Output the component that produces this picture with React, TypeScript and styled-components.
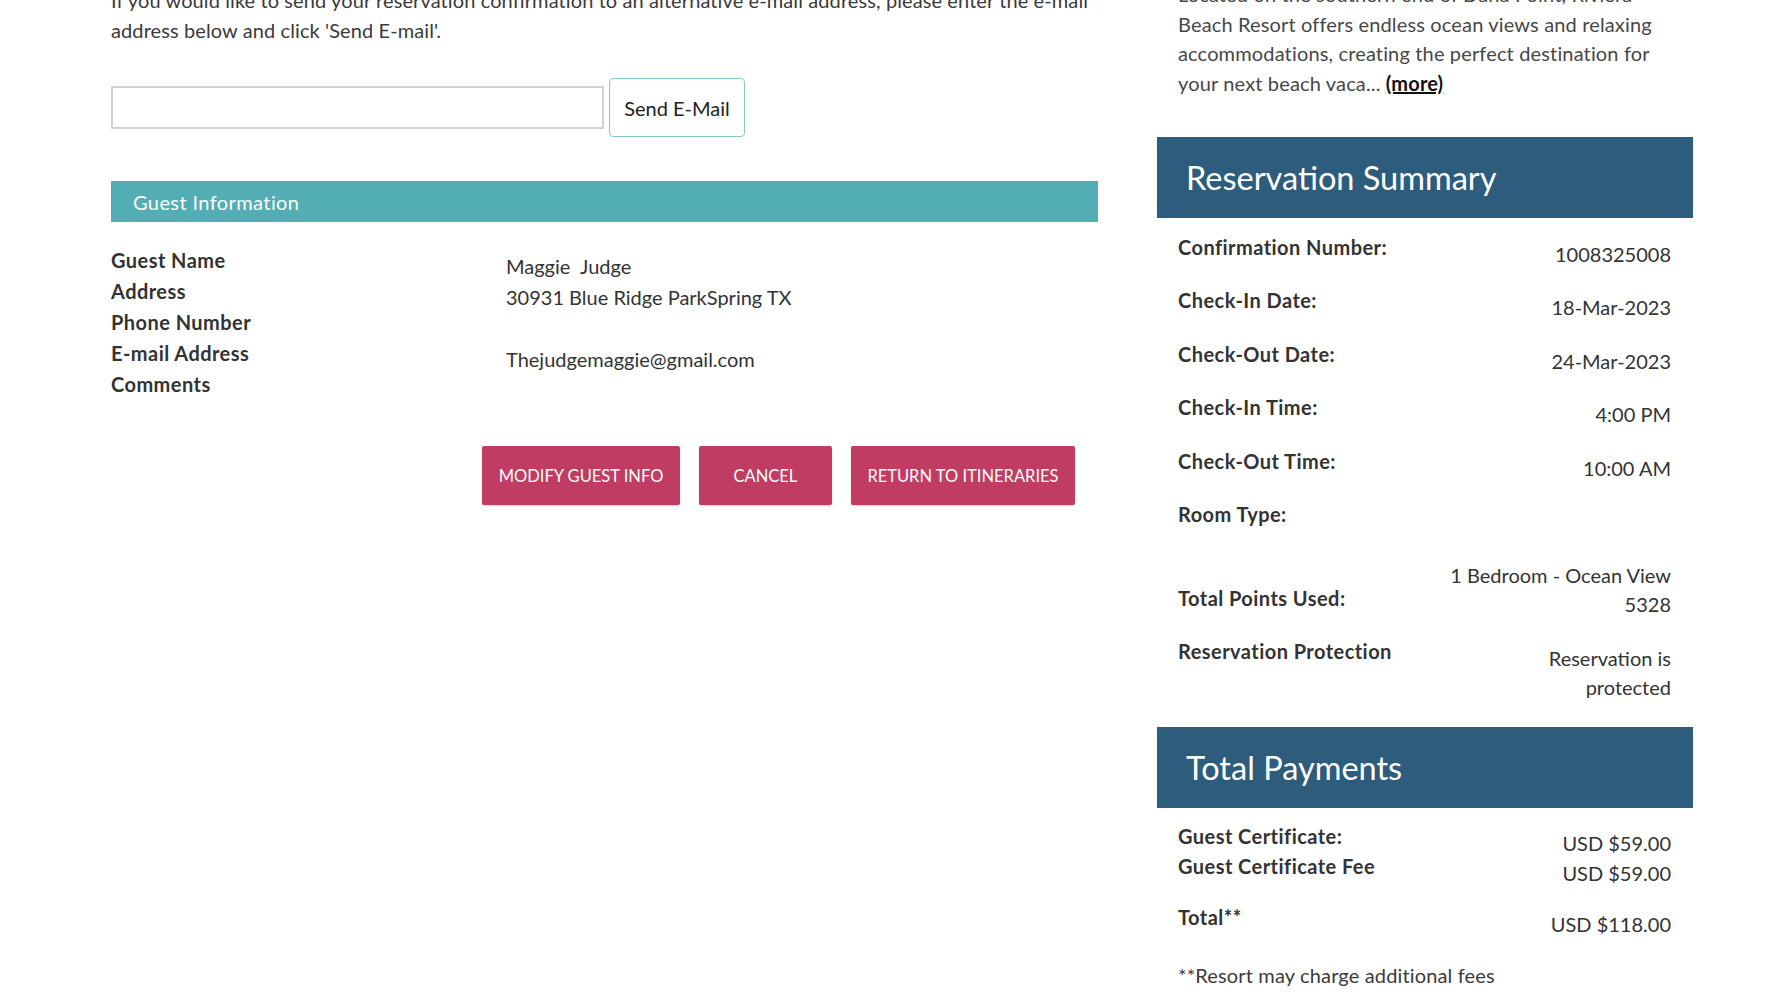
import styled, { createGlobalStyle } from "styled-components";

const GlobalStyle = createGlobalStyle`
  html, body {
    margin: 0;
    padding: 0;
    background: #ffffff;
    overflow: hidden;
  }
  body {
    font-family: Lato, "Open Sans", "Liberation Sans", sans-serif;
    color: #333333;
  }
`;

const Page = styled.div`
  display: grid;
  grid-template-columns: 987px 536px;
  column-gap: 59px;
  padding-left: 111px;
  margin-top: -20px;
  height: 1020px;
  overflow: hidden;
`;

const LeftColumn = styled.div`
  display: flex;
  flex-direction: column;
  padding-top: 4.5px;
`;

const Intro = styled.p`
  margin: 0;
  font-size: 20px;
  line-height: 30px;
  letter-spacing: 0.1px;
  color: #3a3a3a;
  white-space: nowrap;
`;

const EmailRow = styled.div`
  display: flex;
  align-items: center;
  gap: 5px;
  margin-top: 33.5px;
`;

const EmailInput = styled.input`
  box-sizing: border-box;
  width: 493px;
  height: 43px;
  border: 2px solid #d2d2d2;
  border-radius: 1px;
  padding: 0 10px;
  font-family: inherit;
  font-size: 18px;
  outline: none;
`;

const SendButton = styled.button`
  box-sizing: border-box;
  width: 136px;
  height: 59px;
  background: #ffffff;
  border: 1.5px solid #86c9cd;
  border-radius: 4px;
  font-family: inherit;
  font-size: 20px;
  color: #222222;
  cursor: pointer;
`;

const SectionBar = styled.div`
  margin-top: 44px;
  height: 41px;
  display: flex;
  align-items: center;
  padding-left: 22px;
  background: #52adb5;
  color: #ffffff;
  font-size: 20px;
  letter-spacing: 0.4px;
`;

const GuestGrid = styled.div`
  display: flex;
  margin-top: 22.5px;
`;

const LabelStack = styled.div`
  width: 395px;
  display: flex;
  flex-direction: column;
`;

const ValueStack = styled.div`
  display: flex;
  flex-direction: column;
  padding-top: 6px;
`;

const GuestLabel = styled.div`
  height: 31px;
  line-height: 31px;
  font-size: 20px;
  font-weight: 700;
  letter-spacing: 0.45px;
  color: #333333;
`;

const GuestValue = styled.div`
  height: 31px;
  line-height: 31px;
  font-size: 20px;
  color: #333333;
  white-space: pre;
`;

const ActionRow = styled.div`
  display: flex;
  justify-content: flex-end;
  gap: 19px;
  margin-top: 40.8px;
  padding-right: 23px;
`;

const ActionButton = styled.button`
  box-sizing: border-box;
  height: 59px;
  min-width: 133px;
  padding: 0 16.5px;
  border: none;
  border-radius: 2px;
  background: #c13c62;
  box-shadow: 0 1px 2px rgba(0, 0, 0, 0.18);
  color: #ffffff;
  font-family: inherit;
  font-size: 16.5px;
  text-transform: uppercase;
  cursor: pointer;
`;

const RightColumn = styled.div`
  display: flex;
  flex-direction: column;
`;

const Description = styled.p`
  margin: 0;
  padding: 0 21px;
  font-size: 20px;
  line-height: 29.5px;
  letter-spacing: 0.15px;
  color: #474747;
  white-space: nowrap;
`;

const More = styled.a`
  font-weight: 700;
  color: #111111;
  text-decoration: underline;
`;

const PanelHeader = styled.div<{ $gap: number }>`
  margin-top: ${(p) => p.$gap}px;
  height: 81px;
  display: flex;
  align-items: center;
  padding-left: 29px;
  background: #2d5c7c;
  color: #ffffff;
  font-size: 32.5px;
`;

const PanelBody = styled.div`
  padding: 14.5px 22px 0 21px;
`;

const SummaryRow = styled.div`
  display: flex;
  justify-content: space-between;
  align-items: flex-start;
  padding-bottom: 17px;
`;

const PayRow = styled.div<{ $gap?: number }>`
  display: flex;
  justify-content: space-between;
  align-items: flex-start;
  height: 30px;
  margin-top: ${(p) => p.$gap ?? 0}px;
`;

const RowLabel = styled.div<{ $offset?: number }>`
  margin-top: ${(p) => p.$offset ?? 0}px;
  line-height: 29.5px;
  font-size: 20px;
  font-weight: 700;
  letter-spacing: 0.45px;
  color: #333333;
  white-space: nowrap;
`;

const RowValue = styled.div`
  margin-top: 7px;
  min-height: 29.5px;
  line-height: 29.5px;
  font-size: 20px;
  color: #333333;
  text-align: right;
`;

const Footnote = styled.p`
  margin: 28px 0 0;
  line-height: 29.5px;
  font-size: 20px;
  letter-spacing: 0.15px;
  color: #3a3a3a;
`;

const guestLabels = ["Guest Name", "Address", "Phone Number", "E-mail Address", "Comments"];
const guestValues = ["Maggie  Judge", "30931 Blue Ridge ParkSpring TX", "", "Thejudgemaggie@gmail.com", ""];

const summary: { label: string; values: string[]; offset?: number }[] = [
  { label: "Confirmation Number:", values: ["1008325008"] },
  { label: "Check-In Date:", values: ["18-Mar-2023"] },
  { label: "Check-Out Date:", values: ["24-Mar-2023"] },
  { label: "Check-In Time:", values: ["4:00 PM"] },
  { label: "Check-Out Time:", values: ["10:00 AM"] },
  { label: "Room Type:", values: [] },
  { label: "Total Points Used:", values: ["1 Bedroom - Ocean View", "5328"], offset: 30 },
  { label: "Reservation Protection", values: ["Reservation is", "protected"] },
];

const payments = [
  { label: "Guest Certificate:", value: "USD $59.00", gap: 0 },
  { label: "Guest Certificate Fee", value: "USD $59.00", gap: 0 },
  { label: "Total**", value: "USD $118.00", gap: 21 },
];

export default function App() {
  return (
    <>
      <GlobalStyle />
      <Page>
        <LeftColumn>
          <Intro>
            If you would like to send your reservation confirmation to an alternative e-mail address, please enter the e-mail
            <br />
            address below and click 'Send E-mail'.
          </Intro>
          <EmailRow>
            <EmailInput type="text" />
            <SendButton>Send E-Mail</SendButton>
          </EmailRow>
          <SectionBar>Guest Information</SectionBar>
          <GuestGrid>
            <LabelStack>
              {guestLabels.map((l) => (
                <GuestLabel key={l}>{l}</GuestLabel>
              ))}
            </LabelStack>
            <ValueStack>
              {guestValues.map((v, i) => (
                <GuestValue key={i}>{v}</GuestValue>
              ))}
            </ValueStack>
          </GuestGrid>
          <ActionRow>
            <ActionButton>Modify Guest Info</ActionButton>
            <ActionButton>Cancel</ActionButton>
            <ActionButton>Return to Itineraries</ActionButton>
          </ActionRow>
        </LeftColumn>

        <RightColumn>
          <Description>
            Located on the southern end of Dana Point, Riviera
            <br />
            Beach Resort offers endless ocean views and relaxing
            <br />
            accommodations, creating the perfect destination for
            <br />
            your next beach vaca... <More href="#">(more)</More>
          </Description>

          <PanelHeader $gap={39}>Reservation Summary</PanelHeader>
          <PanelBody>
            {summary.map((row) => (
              <SummaryRow key={row.label}>
                <RowLabel $offset={row.offset}>{row.label}</RowLabel>
                <RowValue>
                  {row.values.map((v) => (
                    <div key={v}>{v}</div>
                  ))}
                </RowValue>
              </SummaryRow>
            ))}
          </PanelBody>

          <PanelHeader $gap={7}>Total Payments</PanelHeader>
          <PanelBody>
            {payments.map((p) => (
              <PayRow key={p.label} $gap={p.gap}>
                <RowLabel>{p.label}</RowLabel>
                <RowValue>{p.value}</RowValue>
              </PayRow>
            ))}
            <Footnote>**Resort may charge additional fees</Footnote>
          </PanelBody>
        </RightColumn>
      </Page>
    </>
  );
}
